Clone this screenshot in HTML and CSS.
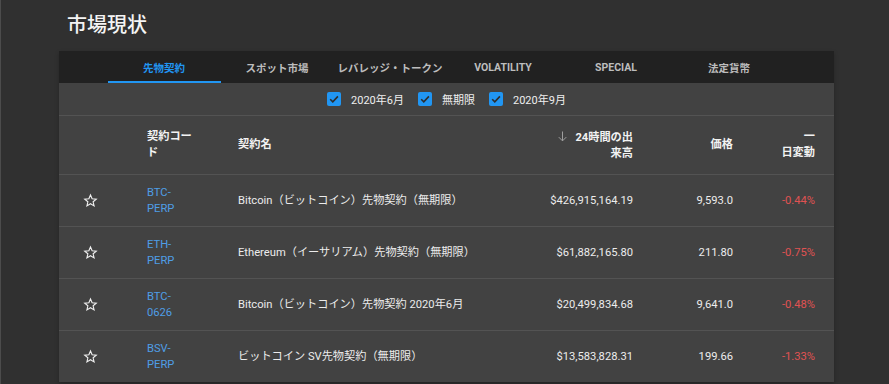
FILE: index.html
```html
<!DOCTYPE html>
<html lang="ja">
<head>
    <meta charset="UTF-8">
    <meta name="viewport" content="width=device-width, initial-scale=1.0">
    <title>市場現状</title>
    <link rel="stylesheet" href="styles.css">
</head>
<body>
    <div id="page">
        <h2 class="title">市場現状</h2>

        <div class="panel">
            <div class="tabs">
                <div class="tab active">先物契約</div>
                <div class="tab">スポット市場</div>
                <div class="tab">レバレッジ・トークン</div>
                <div class="tab">VOLATILITY</div>
                <div class="tab">SPECIAL</div>
                <div class="tab">法定貨幣</div>
            </div>

            <div class="filters">
                <label class="check"><span class="box"><svg viewBox="0 0 14 14"><path d="M3.2 7.2 L5.8 9.8 L10.9 4.4" /></svg></span>2020年6月</label>
                <label class="check"><span class="box"><svg viewBox="0 0 14 14"><path d="M3.2 7.2 L5.8 9.8 L10.9 4.4" /></svg></span>無期限</label>
                <label class="check"><span class="box"><svg viewBox="0 0 14 14"><path d="M3.2 7.2 L5.8 9.8 L10.9 4.4" /></svg></span>2020年9月</label>
            </div>

            <div class="row head">
                <div class="cell"></div>
                <div class="cell code">契約コード</div>
                <div class="cell name">契約名</div>
                <div class="cell num"><svg class="sort" viewBox="0 0 24 24"><path d="M12 4 V19 M6 13 L12 19 L18 13" /></svg>24時間の出来高</div>
                <div class="cell num">価格</div>
                <div class="cell num change">一<br>日変動</div>
            </div>

            <div class="row">
                <div class="cell star"><svg viewBox="0 0 24 24"><path d="M12 3.2 L14.6 9.3 L21.2 9.8 L16.2 14.1 L17.7 20.6 L12 17.2 L6.3 20.6 L7.8 14.1 L2.8 9.8 L9.4 9.3 Z" /></svg></div>
                <div class="cell code link">BTC-<wbr>PERP</div>
                <div class="cell name">Bitcoin（ビットコイン）先物契約（無期限）</div>
                <div class="cell num">$426,915,164.19</div>
                <div class="cell num">9,593.0</div>
                <div class="cell num change down">-0.44%</div>
            </div>

            <div class="row">
                <div class="cell star"><svg viewBox="0 0 24 24"><path d="M12 3.2 L14.6 9.3 L21.2 9.8 L16.2 14.1 L17.7 20.6 L12 17.2 L6.3 20.6 L7.8 14.1 L2.8 9.8 L9.4 9.3 Z" /></svg></div>
                <div class="cell code link">ETH-<wbr>PERP</div>
                <div class="cell name">Ethereum（イーサリアム）先物契約（無期限）</div>
                <div class="cell num">$61,882,165.80</div>
                <div class="cell num">211.80</div>
                <div class="cell num change down">-0.75%</div>
            </div>

            <div class="row">
                <div class="cell star"><svg viewBox="0 0 24 24"><path d="M12 3.2 L14.6 9.3 L21.2 9.8 L16.2 14.1 L17.7 20.6 L12 17.2 L6.3 20.6 L7.8 14.1 L2.8 9.8 L9.4 9.3 Z" /></svg></div>
                <div class="cell code link">BTC-<wbr>0626</div>
                <div class="cell name">Bitcoin（ビットコイン）先物契約 2020年6月</div>
                <div class="cell num">$20,499,834.68</div>
                <div class="cell num">9,641.0</div>
                <div class="cell num change down">-0.48%</div>
            </div>

            <div class="row">
                <div class="cell star"><svg viewBox="0 0 24 24"><path d="M12 3.2 L14.6 9.3 L21.2 9.8 L16.2 14.1 L17.7 20.6 L12 17.2 L6.3 20.6 L7.8 14.1 L2.8 9.8 L9.4 9.3 Z" /></svg></div>
                <div class="cell code link">BSV-<wbr>PERP</div>
                <div class="cell name">ビットコイン SV先物契約（無期限）</div>
                <div class="cell num">$13,583,828.31</div>
                <div class="cell num">199.66</div>
                <div class="cell num change down">-1.33%</div>
            </div>
        </div>
    </div>
</body>
</html>
```

FILE: styles.css
```css
html, body {
    margin: 0;
    padding: 0;
    height: 100%;
    overflow: hidden;
}
body {
    font-family: Roboto, "Noto Sans CJK JP", sans-serif;
    background-color: #303030;
    color: #ececec;
    border-left: 1px solid #4c4c4c;
    box-sizing: border-box;
}
#page {
    padding-left: 58px;
}
.title {
    margin: 0;
    padding: 13px 0 0 8px;
    height: 38px;
    font-size: 20px;
    line-height: 24px;
    font-weight: 500;
    color: #f4f4f4;
}
.panel {
    width: 775px;
    background-color: #424242;
    box-shadow: 0 2px 4px rgba(0, 0, 0, 0.25);
}
.tabs {
    display: flex;
    justify-content: center;
    height: 32px;
    background-color: #212121;
}
.tab {
    width: 113px;
    display: flex;
    align-items: center;
    justify-content: center;
    font-size: 10.5px;
    font-weight: 700;
    color: #bdbdbd;
    box-sizing: border-box;
    padding-top: 1px;
}
.tab.active {
    color: #2196f3;
    border-bottom: 2px solid #2196f3;
    padding-top: 3px;
}
.filters {
    display: flex;
    justify-content: center;
    align-items: center;
    gap: 14px;
    height: 32px;
    border-bottom: 1px solid #535353;
    font-size: 11px;
    color: #eeeeee;
}
.check {
    display: flex;
    align-items: center;
    gap: 10px;
}
.box {
    width: 14px;
    height: 14px;
    border-radius: 2px;
    background-color: #2196f3;
    display: flex;
}
.box svg {
    width: 14px;
    height: 14px;
    fill: none;
    stroke: #2d2d2d;
    stroke-width: 1.6;
}
.row {
    display: grid;
    grid-template-columns: 88px 47px 1fr 83px 100px 82px;
    padding-right: 19px;
    height: 51px;
    border-bottom: 1px solid #535353;
    font-size: 11.2px;
    line-height: 16px;
}
.row:last-child {
    border-bottom: none;
}
.row.head {
    height: 58px;
    font-weight: 700;
    color: #f2f2f2;
}
.cell {
    display: flex;
    align-items: center;
}
.cell.name {
    padding-left: 44px;
    white-space: nowrap;
}
.cell.num {
    justify-content: flex-end;
    text-align: right;
    white-space: nowrap;
}
.head .cell.num {
    white-space: normal;
    display: block;
    align-self: center;
}
.cell.change {
    padding-left: 42px;
}
.link {
    color: #4f9ee6;
}
.down {
    color: #e05252;
}
.star {
    padding-left: 24px;
}
.star svg {
    width: 15px;
    height: 15px;
    fill: none;
    stroke: #f0f0f0;
    stroke-width: 1.8;
    stroke-linejoin: miter;
}
.sort {
    width: 15px;
    height: 15px;
    fill: none;
    stroke: #9e9e9e;
    stroke-width: 1.6;
    vertical-align: -3px;
    margin-right: 5px;
}
```
